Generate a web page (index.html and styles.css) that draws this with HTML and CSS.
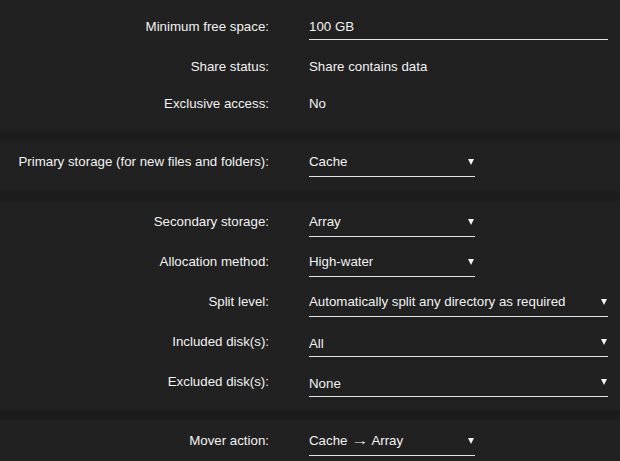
FILE: index.html
```html
<!DOCTYPE html>
<html lang="en">
<head>
    <meta charset="UTF-8">
    <meta name="viewport" content="width=device-width, initial-scale=1.0">
    <title>Share Settings</title>
    <link rel="stylesheet" href="styles.css">
</head>
<body>
    <div class="section first">
        <div class="row">
            <div class="label">Minimum free space:</div>
            <div class="field input wide">100 GB</div>
        </div>
        <div class="row text-row">
            <div class="label">Share status:</div>
            <div class="value">Share contains data</div>
        </div>
        <div class="row text-row">
            <div class="label">Exclusive access:</div>
            <div class="value">No</div>
        </div>
    </div>

    <div class="section">
        <div class="row">
            <div class="label">Primary storage (for new files and folders):</div>
            <div class="field select">Cache<span class="caret"></span></div>
        </div>
    </div>

    <div class="section tight">
        <div class="row">
            <div class="label">Secondary storage:</div>
            <div class="field select">Array<span class="caret"></span></div>
        </div>
        <div class="row">
            <div class="label">Allocation method:</div>
            <div class="field select">High-water<span class="caret"></span></div>
        </div>
        <div class="row">
            <div class="label">Split level:</div>
            <div class="field select wide">Automatically split any directory as required<span class="caret"></span></div>
        </div>
        <div class="row">
            <div class="label">Included disk(s):</div>
            <div class="field select wide multi">All<span class="caret"></span></div>
        </div>
        <div class="row">
            <div class="label">Excluded disk(s):</div>
            <div class="field select wide multi">None<span class="caret"></span></div>
        </div>
    </div>

    <div class="section">
        <div class="row">
            <div class="label">Mover action:</div>
            <div class="field select">Cache <span class="arrow">&rarr;</span> Array<span class="caret"></span></div>
        </div>
    </div>
</body>
</html>
```

FILE: styles.css
```css
body {
    margin: 0;
    background-color: #1c1c1c;
    color: #f2f2f2;
    font-family: "Liberation Sans", Arial, sans-serif;
    font-size: 13.3px;
}
.section {
    background-color: #212121;
    padding: 1px 0 9px;
    margin-bottom: 10px;
}
.section.first {
    padding: 7px 0 10px;
}
.section.tight {
    padding-bottom: 8px;
}
.row {
    display: flex;
    align-items: flex-start;
    gap: 40px;
    height: 40px;
    padding-top: 12px;
    box-sizing: border-box;
}
.row.text-row {
    height: 37px;
}
.label {
    width: 269px;
    text-align: right;
    line-height: 16px;
    flex-shrink: 0;
}
.value {
    line-height: 16px;
}
.field {
    position: relative;
    width: 166px;
    line-height: 16px;
    padding-bottom: 6px;
    border-bottom: 1px solid #e4e4e4;
}
.field.wide {
    width: 299px;
}
.field.input {
    padding-bottom: 4px;
}
.field.multi {
    padding-top: 2px;
    padding-bottom: 4px;
}
.arrow {
    display: inline-block;
    transform: scaleX(1.3);
    margin: 0 2px;
}
.caret {
    position: absolute;
    right: 1px;
    top: 5px;
    width: 0;
    height: 0;
    border-left: 3px solid transparent;
    border-right: 3px solid transparent;
    border-top: 6px solid #f2f2f2;
}
```
